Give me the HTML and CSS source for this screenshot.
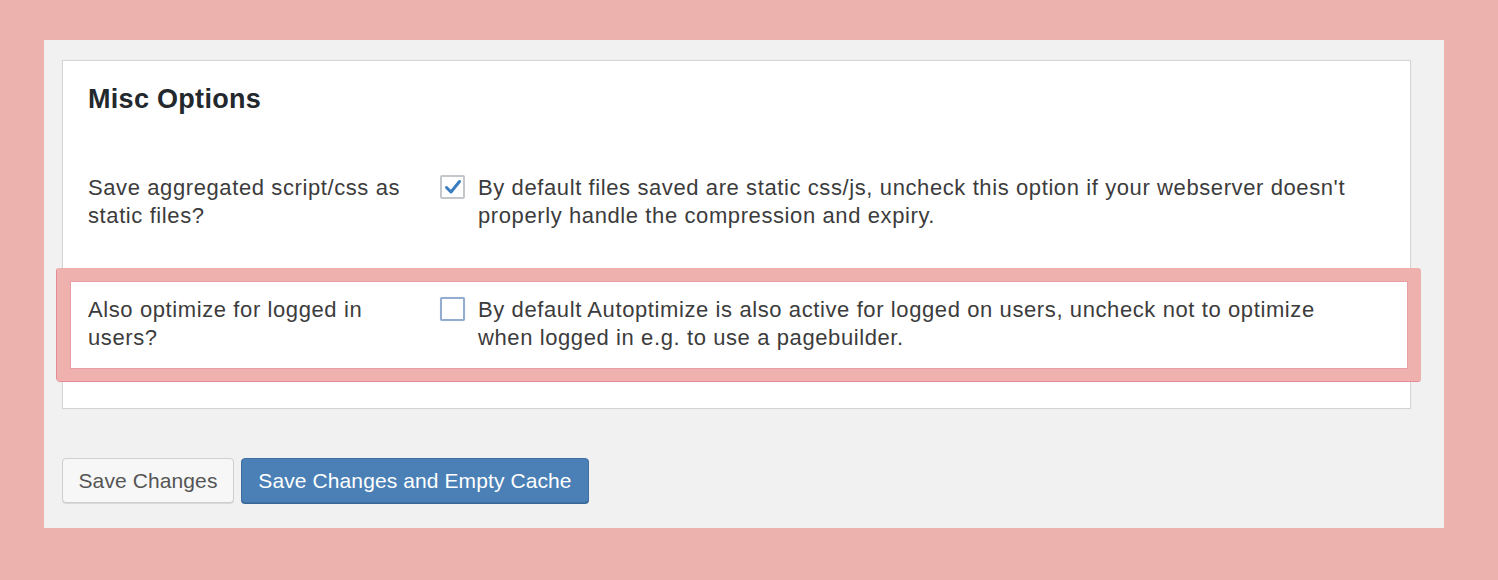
FILE: index.html
```html
<!DOCTYPE html>
<html>
<head>
<meta charset="utf-8">
<link rel="stylesheet" href="styles.css">
</head>
<body>
<div class="panel">
  <div class="card">
    <h2 class="title">Misc Options</h2>
    <div class="row row-first">
      <div class="label">Save aggregated script/css as<br>static files?</div>
      <div class="field">
        <span class="cb cb-checked">
          <svg viewBox="0 0 20 20" width="20" height="20"><path d="M3.5 10.5 L8 15 L16.5 4.5" fill="none" stroke="#3a7cc0" stroke-width="3" stroke-linecap="round" stroke-linejoin="round"/></svg>
        </span>
        <div class="desc">By default files saved are static css/js, uncheck this option if your webserver doesn't<br>properly handle the compression and expiry.</div>
      </div>
    </div>
    <div class="row row-highlight">
      <div class="label">Also optimize for logged in<br>users?</div>
      <div class="field">
        <span class="cb cb-focus"></span>
        <div class="desc">By default Autoptimize is also active for logged on users, uncheck not to optimize<br>when logged in e.g. to use a pagebuilder.</div>
      </div>
    </div>
  </div>
  <div class="actions">
    <button class="btn btn-secondary">Save Changes</button>
    <button class="btn btn-primary">Save Changes and Empty Cache</button>
  </div>
</div>
</body>
</html>
```

FILE: styles.css
```css
html, body {
  margin: 0;
  padding: 0;
}
body {
  background: #ecb2ad;
  font-family: "Liberation Sans", Arial, sans-serif;
  width: 1498px;
  height: 580px;
  overflow: hidden;
}
.panel {
  margin: 40px 0 0 44px;
  width: 1400px;
  height: 488px;
  box-sizing: border-box;
  background: #f1f1f1;
  padding: 20px 0 0 18px;
}
.card {
  width: 1349px;
  box-sizing: border-box;
  background: #fff;
  border: 1px solid #d4d4d4;
  box-shadow: 0 0 1px rgba(0,0,0,0.06);
  padding: 23px 0 0 0;
}
.title {
  margin: 0;
  padding-left: 25px;
  font-size: 27px;
  letter-spacing: 0.3px;
  line-height: 30px;
  font-weight: bold;
  color: #23282d;
}
.row {
  display: flex;
  align-items: flex-start;
  font-size: 22px;
  letter-spacing: 0.6px;
  line-height: 28px;
  color: #3c3c3c;
}
.row-first {
  padding: 60px 0 38px 25px;
}
.row-highlight {
  margin: 0 -11px 27px -6px;
  border: 13px solid #eeb1ae;
  border-bottom-width: 12px;
  padding: 15px 0 17px 18px;
  border-radius: 3px;
  box-shadow: inset 0 0 0 1px #e8a0a6, -1px 0 0 #e68a98, 0 1px 0 #e68a98;
}
.label {
  width: 352px;
  flex: none;
}
.field {
  display: flex;
  align-items: flex-start;
}
.cb {
  flex: none;
  width: 25px;
  height: 24px;
  box-sizing: border-box;
  margin-top: 1px;
  margin-right: 13px;
  border-radius: 2px;
  display: flex;
  align-items: center;
  justify-content: center;
  background: #fff;
}
.cb-checked {
  border: 2px solid #c3c7cc;
}
.cb-focus {
  border: 2px solid #94acd0;
  box-shadow: 0 0 1px rgba(90,130,190,0.4);
}
.desc {
  color: #3c3c3c;
}
.actions {
  display: flex;
  gap: 7px;
  margin-top: 49px;
}
.btn {
  font-family: "Liberation Sans", Arial, sans-serif;
  font-size: 21px;
  letter-spacing: 0.1px;
  height: 45px;
  box-sizing: border-box;
  border-radius: 4px;
  padding: 0;
  cursor: pointer;
}
.btn-secondary {
  width: 172px;
  background: #f7f7f7;
  border: 1px solid #cfcfcf;
  color: #555;
  box-shadow: 0 1px 0 #d8d8d8;
}
.btn-primary {
  width: 348px;
  background: #4a80b6;
  border: 1px solid #3d6fa3;
  color: #fff;
  box-shadow: 0 1px 0 #3a6796;
}
```
